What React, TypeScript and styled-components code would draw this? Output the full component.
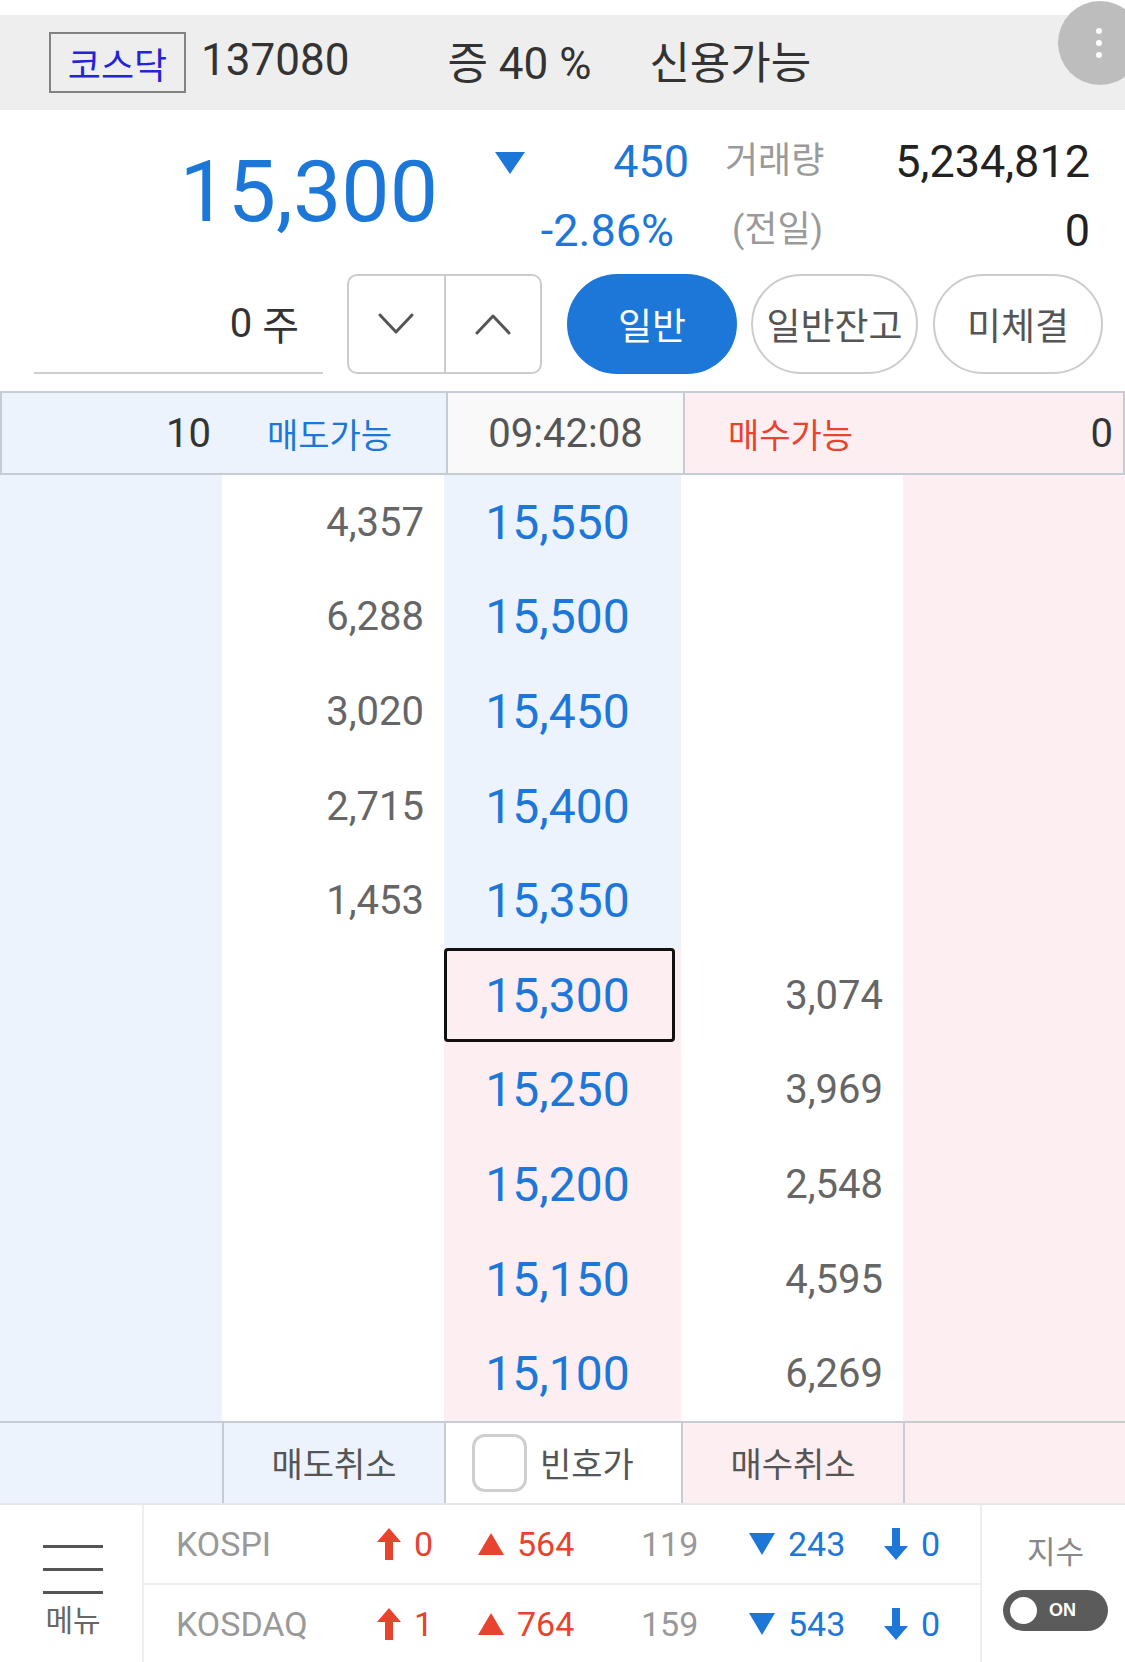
import { Fragment } from "react";
import styled, { createGlobalStyle } from "styled-components";

const GlobalStyle = createGlobalStyle`
  html, body {
    margin: 0;
    padding: 0;
    background: #ffffff;
  }
  * {
    box-sizing: border-box;
  }
`;

const BLUE = "#1c77d9";
const RED = "#e8432f";
const BLUE_BG = "#edf3fd";
const PINK_BG = "#fdeef1";
const LINE = "#c6ccd4";

const Page = styled.div`
  position: relative;
  width: 1125px;
  height: 1662px;
  overflow: hidden;
  background: #fff;
  font-family: Roboto, "Noto Sans CJK KR", sans-serif;
  color: #333;
`;

/* ---------- top bar ---------- */

const TopBar = styled.div`
  margin-top: 15px;
  height: 95px;
  background: #eeeeee;
  display: flex;
  align-items: center;
  padding-left: 49px;
  padding-bottom: 6px;
`;

const MarketTag = styled.div`
  width: 137px;
  height: 61px;
  margin-top: 6px;
  border: 2px solid #828282;
  color: #2424d6;
  font-size: 36px;
  display: flex;
  align-items: center;
  justify-content: center;
`;

const HeaderText = styled.span<{ $gap: number }>`
  margin-left: ${({ $gap }) => $gap}px;
  font-size: 44px;
  color: #333;
  white-space: nowrap;
`;

const MoreButton = styled.div`
  position: absolute;
  top: 1px;
  left: 1058px;
  width: 84px;
  height: 84px;
  border-radius: 50%;
  background: #bdbdbd;
  display: flex;
  flex-direction: column;
  align-items: flex-start;
  justify-content: center;
  gap: 6px;
  padding-left: 38px;

  span {
    width: 6px;
    height: 6px;
    border-radius: 50%;
    background: #fff;
  }
`;

/* ---------- quote ---------- */

const QuoteGrid = styled.div`
  display: grid;
  grid-template-columns: 438px 87px 164px 102px 1fr;
  grid-template-rows: 69px 69px;
  padding-top: 17px;
`;

const BigPrice = styled.div`
  grid-row: 1 / span 2;
  align-self: start;
  margin-top: 22px;
  text-align: right;
  font-size: 86px;
  line-height: 1;
  color: ${BLUE};
`;

const DownMark = styled.svg`
  grid-row: 1;
  grid-column: 2;
  justify-self: end;
  margin-top: 25px;
`;

const Change = styled.div<{ $row: number; $pad?: number }>`
  grid-row: ${({ $row }) => $row};
  grid-column: 3;
  text-align: right;
  padding-right: ${({ $pad }) => $pad ?? 0}px;
  font-size: 45px;
  line-height: 69px;
  color: ${BLUE};
  white-space: nowrap;
`;

const VolLabel = styled.div<{ $row: number; $indent?: number }>`
  grid-row: ${({ $row }) => $row};
  grid-column: 4;
  padding-left: ${({ $indent }) => 36 + ($indent ?? 0)}px;
  font-size: 36px;
  line-height: 69px;
  color: #9a9a9a;
  white-space: nowrap;
`;

const VolValue = styled.div<{ $row: number }>`
  grid-row: ${({ $row }) => $row};
  grid-column: 5;
  text-align: right;
  padding-right: 35px;
  font-size: 45px;
  line-height: 69px;
  color: #222;
`;

/* ---------- order controls ---------- */

const ControlRow = styled.div`
  display: flex;
  align-items: center;
  height: 100px;
  margin-top: 9px;
`;

const QtyField = styled.div`
  margin-left: 34px;
  width: 289px;
  height: 100px;
  border-bottom: 2px solid #cfcfcf;
  display: flex;
  align-items: center;
  justify-content: flex-end;
  padding-right: 24px;
  font-size: 40px;
  color: #333;
  gap: 10px;
`;

const Stepper = styled.div`
  margin-left: 24px;
  width: 195px;
  height: 100px;
  border: 2px solid #cccccc;
  border-radius: 10px;
  display: flex;
`;

const StepButton = styled.div<{ $divider?: boolean }>`
  flex: 1;
  display: flex;
  align-items: center;
  justify-content: center;
  border-left: ${({ $divider }) => ($divider ? "2px solid #cccccc" : "none")};
`;

const Pill = styled.div<{ $active?: boolean; $gap: number; $width: number }>`
  margin-left: ${({ $gap }) => $gap}px;
  width: ${({ $width }) => $width}px;
  height: 100px;
  border-radius: 50px;
  display: flex;
  align-items: center;
  justify-content: center;
  font-size: 37px;
  white-space: nowrap;
  background: ${({ $active }) => ($active ? BLUE : "#fff")};
  color: ${({ $active }) => ($active ? "#fff" : "#555")};
  border: ${({ $active }) => ($active ? "none" : "2px solid #cccccc")};
`;

/* ---------- order book ---------- */

const BookHeader = styled.div`
  margin-top: 17px;
  height: 84px;
  display: grid;
  grid-template-columns: 444px 237px 1fr;
  border: 2px solid ${LINE};
`;

const HeadCell = styled.div<{ $bg: string; $divider?: boolean }>`
  background: ${({ $bg }) => $bg};
  display: flex;
  align-items: center;
  border-left: ${({ $divider }) => ($divider ? `2px solid ${LINE}` : "none")};
`;

const HeadNum = styled.span<{ $width?: number; $push?: boolean }>`
  font-size: 40px;
  color: #333;
  text-align: right;
  width: ${({ $width }) => ($width ? `${$width}px` : "auto")};
  margin-left: ${({ $push }) => ($push ? "auto" : "0")};
  padding-right: ${({ $push }) => ($push ? "10px" : "0")};
`;

const HeadLabel = styled.span<{ $color: string; $gap: number }>`
  margin-left: ${({ $gap }) => $gap}px;
  font-size: 34px;
  color: ${({ $color }) => $color};
`;

const TimeText = styled.span`
  width: 100%;
  text-align: center;
  font-size: 40px;
  color: #555;
`;

const BookBody = styled.div`
  display: grid;
  grid-template-columns: 222px 222px 237px 222px 1fr;
  grid-auto-rows: 94.6px;
`;

const Cell = styled.div<{ $bg: string }>`
  background: ${({ $bg }) => $bg};
  display: flex;
  align-items: center;
  justify-content: flex-end;
  padding-right: 20px;
`;

const Qty = styled.span`
  font-size: 40px;
  color: #666;
`;

const PriceCell = styled.div<{ $bg: string }>`
  background: ${({ $bg }) => $bg};
  display: flex;
  align-items: center;
  justify-content: flex-start;
`;

const PriceBox = styled.div<{ $current?: boolean }>`
  width: 231px;
  height: 94px;
  display: flex;
  align-items: center;
  justify-content: center;
  padding-right: 4px;
  font-size: 48px;
  color: ${BLUE};
  border: ${({ $current }) => ($current ? "3px solid #111" : "3px solid transparent")};
  border-radius: 4px;
`;

const BookFooter = styled.div`
  height: 84px;
  display: grid;
  grid-template-columns: 222px 222px 237px 222px 1fr;
  border-top: 2px solid ${LINE};
  border-bottom: 2px solid #e4e7eb;
`;

const FootCell = styled.div<{ $bg: string; $divider?: boolean; $start?: boolean }>`
  background: ${({ $bg }) => $bg};
  border-left: ${({ $divider }) => ($divider ? `2px solid ${LINE}` : "none")};
  display: flex;
  align-items: center;
  justify-content: ${({ $start }) => ($start ? "flex-start" : "center")};
  padding-left: ${({ $start }) => ($start ? "26px" : "0")};
  gap: 13px;
  font-size: 34px;
  color: #555;
`;

const CheckBox = styled.div`
  width: 55px;
  height: 58px;
  border: 3px solid #cfcfcf;
  border-radius: 13px;
  background: #fff;
`;

/* ---------- bottom index bar ---------- */

const BottomBar = styled.div`
  height: 158px;
  display: grid;
  grid-template-columns: 144px 836px 1fr;
`;

const MenuCol = styled.div`
  border-right: 2px solid #eeeeee;
  display: flex;
  flex-direction: column;
  align-items: center;
  padding-top: 40px;
  padding-left: 4px;
`;

const MenuLine = styled.div`
  width: 60px;
  height: 3px;
  background: #555;
  margin-bottom: 20px;
`;

const MenuLabel = styled.div`
  margin-top: -18px;
  font-size: 30px;
  color: #666;
`;

const IndexRows = styled.div`
  display: grid;
  grid-template-rows: 78px 1fr;
`;

const IndexRow = styled.div<{ $divider?: boolean }>`
  display: grid;
  grid-template-columns: 200px 101px 164px 107px 135px 1fr;
  align-items: center;
  padding-left: 32px;
  border-top: ${({ $divider }) => ($divider ? "2px solid #eeeeee" : "none")};
  font-size: 34px;
`;

const IndexName = styled.span`
  color: #999;
`;

const IndexVal = styled.span<{ $color: string }>`
  display: flex;
  align-items: center;
  gap: 12px;
  color: ${({ $color }) => $color};
`;

const SwitchCol = styled.div`
  border-left: 2px solid #eeeeee;
  display: flex;
  flex-direction: column;
  align-items: center;
  padding-top: 22px;
  padding-left: 4px;
`;

const SwitchLabel = styled.div`
  font-size: 31px;
  color: #888;
`;

const Toggle = styled.div`
  margin-top: 18px;
  width: 105px;
  height: 41px;
  border-radius: 21px;
  background: #5b5b5b;
  display: flex;
  align-items: center;
  padding-left: 7px;
  gap: 12px;

  i {
    width: 27px;
    height: 27px;
    border-radius: 50%;
    background: #fff;
  }

  b {
    font-family: "Liberation Sans", Arial, sans-serif;
    font-size: 18px;
    color: #fff;
  }
`;

/* ---------- icons ---------- */

const Chevron = ({ up }: { up?: boolean }) => (
  <svg width="36" height="22" viewBox="0 0 36 22">
    <polyline
      points={up ? "2,20 18,3 34,20" : "2,2 18,19 34,2"}
      fill="none"
      stroke="#555"
      strokeWidth="3"
      strokeLinecap="round"
      strokeLinejoin="round"
    />
  </svg>
);

const Tri = ({ up, color }: { up?: boolean; color: string }) => (
  <svg width="28" height="24" viewBox="0 0 28 24">
    <polygon points={up ? "14,1 27,23 1,23" : "1,1 27,1 14,23"} fill={color} />
  </svg>
);

const Arrow = ({ up, color }: { up?: boolean; color: string }) => (
  <svg width="26" height="34" viewBox="0 0 26 34">
    <path
      d={up ? "M13 1 L25 15 H17 V33 H9 V15 H1 Z" : "M13 33 L25 19 H17 V1 H9 V19 H1 Z"}
      fill={color}
    />
  </svg>
);

/* ---------- data ---------- */

const asks = [
  { qty: "4,357", price: "15,550" },
  { qty: "6,288", price: "15,500" },
  { qty: "3,020", price: "15,450" },
  { qty: "2,715", price: "15,400" },
  { qty: "1,453", price: "15,350" },
];

const bids = [
  { qty: "3,074", price: "15,300" },
  { qty: "3,969", price: "15,250" },
  { qty: "2,548", price: "15,200" },
  { qty: "4,595", price: "15,150" },
  { qty: "6,269", price: "15,100" },
];

const indices = [
  { name: "KOSPI", up: "0", rise: "564", flat: "119", fall: "243", down: "0" },
  { name: "KOSDAQ", up: "1", rise: "764", flat: "159", fall: "543", down: "0" },
];

const App = () => {
  return (
    <Page>
      <GlobalStyle />
      <TopBar>
        <MarketTag>코스닥</MarketTag>
        <HeaderText $gap={15}>137080</HeaderText>
        <HeaderText $gap={98}>증 40 %</HeaderText>
        <HeaderText $gap={58}>신용가능</HeaderText>
      </TopBar>
      <MoreButton>
        <span />
        <span />
        <span />
      </MoreButton>

      <QuoteGrid>
        <BigPrice>15,300</BigPrice>
        <DownMark width="30" height="22" viewBox="0 0 30 22">
          <polygon points="0,0 30,0 15,22" fill={BLUE} />
        </DownMark>
        <Change $row={1}>450</Change>
        <Change $row={2} $pad={15}>
          -2.86%
        </Change>
        <VolLabel $row={1}>거래량</VolLabel>
        <VolLabel $row={2} $indent={7}>
          (전일)
        </VolLabel>
        <VolValue $row={1}>5,234,812</VolValue>
        <VolValue $row={2}>0</VolValue>
      </QuoteGrid>

      <ControlRow>
        <QtyField>
          <span>0</span>
          <span>주</span>
        </QtyField>
        <Stepper>
          <StepButton>
            <Chevron />
          </StepButton>
          <StepButton $divider>
            <Chevron up />
          </StepButton>
        </Stepper>
        <Pill $active $gap={25} $width={170}>
          일반
        </Pill>
        <Pill $gap={14} $width={167}>
          일반잔고
        </Pill>
        <Pill $gap={15} $width={170}>
          미체결
        </Pill>
      </ControlRow>

      <BookHeader>
        <HeadCell $bg={BLUE_BG}>
          <HeadNum $width={209}>10</HeadNum>
          <HeadLabel $color={BLUE} $gap={56}>
            매도가능
          </HeadLabel>
        </HeadCell>
        <HeadCell $bg="#f9f9f9" $divider>
          <TimeText>09:42:08</TimeText>
        </HeadCell>
        <HeadCell $bg={PINK_BG} $divider>
          <HeadLabel $color={RED} $gap={43}>
            매수가능
          </HeadLabel>
          <HeadNum $push>0</HeadNum>
        </HeadCell>
      </BookHeader>

      <BookBody>
        {asks.map((a) => (
          <Fragment key={a.price}>
            <Cell $bg={BLUE_BG} />
            <Cell $bg="#fff">
              <Qty>{a.qty}</Qty>
            </Cell>
            <PriceCell $bg={BLUE_BG}>
              <PriceBox>{a.price}</PriceBox>
            </PriceCell>
            <Cell $bg="#fff" />
            <Cell $bg={PINK_BG} />
          </Fragment>
        ))}
        {bids.map((b, i) => (
          <Fragment key={b.price}>
            <Cell $bg={BLUE_BG} />
            <Cell $bg="#fff" />
            <PriceCell $bg={PINK_BG}>
              <PriceBox $current={i === 0}>{b.price}</PriceBox>
            </PriceCell>
            <Cell $bg="#fff">
              <Qty>{b.qty}</Qty>
            </Cell>
            <Cell $bg={PINK_BG} />
          </Fragment>
        ))}
      </BookBody>

      <BookFooter>
        <FootCell $bg={BLUE_BG} />
        <FootCell $bg={BLUE_BG} $divider>
          매도취소
        </FootCell>
        <FootCell $bg="#fff" $divider $start>
          <CheckBox />
          <span>빈호가</span>
        </FootCell>
        <FootCell $bg={PINK_BG} $divider>
          매수취소
        </FootCell>
        <FootCell $bg={PINK_BG} $divider />
      </BookFooter>

      <BottomBar>
        <MenuCol>
          <MenuLine />
          <MenuLine />
          <MenuLine />
          <MenuLabel>메뉴</MenuLabel>
        </MenuCol>
        <IndexRows>
          {indices.map((x, i) => (
            <IndexRow key={x.name} $divider={i > 0}>
              <IndexName>{x.name}</IndexName>
              <IndexVal $color={RED}>
                <Arrow up color={RED} />
                {x.up}
              </IndexVal>
              <IndexVal $color={RED}>
                <Tri up color={RED} />
                {x.rise}
              </IndexVal>
              <IndexVal $color="#999">{x.flat}</IndexVal>
              <IndexVal $color={BLUE}>
                <Tri color={BLUE} />
                {x.fall}
              </IndexVal>
              <IndexVal $color={BLUE}>
                <Arrow color={BLUE} />
                {x.down}
              </IndexVal>
            </IndexRow>
          ))}
        </IndexRows>
        <SwitchCol>
          <SwitchLabel>지수</SwitchLabel>
          <Toggle>
            <i />
            <b>ON</b>
          </Toggle>
        </SwitchCol>
      </BottomBar>
    </Page>
  );
};

export default App;
